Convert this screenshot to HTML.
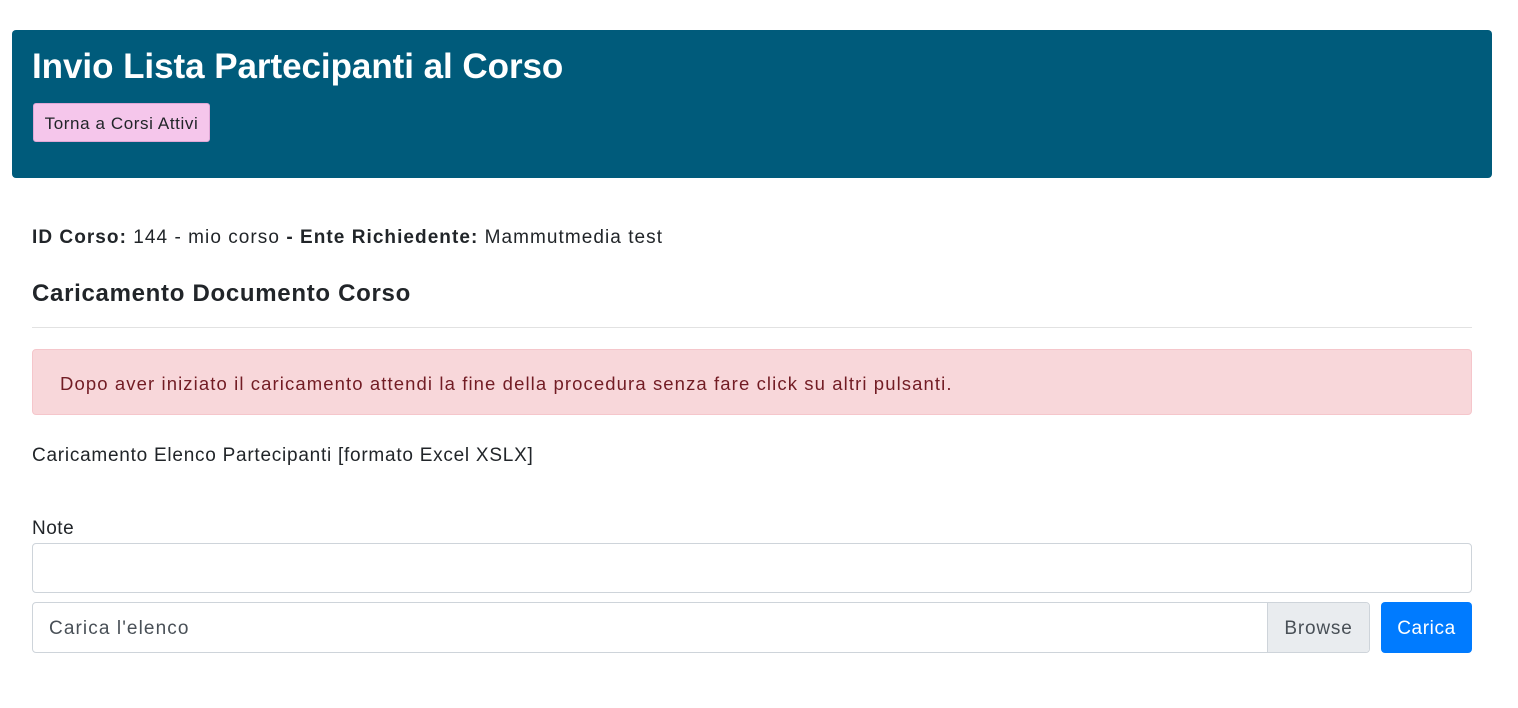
<!DOCTYPE html>
<html><head><meta charset="utf-8"><style>
*{box-sizing:border-box;margin:0;padding:0}
body{width:1518px;height:708px;background:#fff;font-family:"Liberation Sans",sans-serif;color:#212529;font-size:19px;letter-spacing:1.1px;position:relative;overflow:hidden}
.hdr{position:absolute;left:12px;top:30px;width:1480px;height:148px;background:#005b7b;border-radius:4px}
.hdr h1{position:absolute;left:20px;top:17px;color:#fff;font-size:35px;font-weight:bold;letter-spacing:-0.05px}
.btn1{position:absolute;left:21px;top:73px;width:177px;height:39px;background:#f5c6eb;border:1px solid #e0a8d6;border-radius:3px;font-size:17px;letter-spacing:0.6px;color:#212529;line-height:39px;text-align:center}
.abs{position:absolute}
hr{position:absolute;left:32px;top:327px;width:1440px;border:0;border-top:1px solid #e2e2e2}
.alert{position:absolute;left:32px;top:349px;width:1440px;height:66px;background:#f8d7da;border:1px solid #f5c6cb;border-radius:4px;color:#721c24;padding-left:27px;line-height:68px;font-size:18.5px}
.inp{position:absolute;left:32px;width:1440px;border:1px solid #ced4da;border-radius:4px;background:#fff}
</style></head><body>
<div class="hdr"><h1>Invio Lista Partecipanti al Corso</h1><div class="btn1">Torna a Corsi Attivi</div></div>
<div class="abs" style="left:32px;top:227px;letter-spacing:1.05px"><b>ID Corso:</b> 144 - mio corso <b>- Ente Richiedente:</b> Mammutmedia test</div>
<div class="abs" style="left:32px;top:280px;font-size:24px;font-weight:bold;letter-spacing:0.7px">Caricamento Documento Corso</div>
<hr>
<div class="alert">Dopo aver iniziato il caricamento attendi la fine della procedura senza fare click su altri pulsanti.</div>
<div class="abs" style="left:32px;top:445px;letter-spacing:0.75px">Caricamento Elenco Partecipanti [formato Excel XSLX]</div>
<div class="abs" style="left:32px;top:518px;letter-spacing:0.5px">Note</div>
<div class="inp" style="top:543px;height:50px"></div>
<div class="inp" style="top:602px;height:51px;width:1338px;color:#495057;line-height:51px;padding-left:16px">Carica l'elenco
<div style="position:absolute;right:0;top:0;width:102px;height:49px;background:#e9ecef;border-left:1px solid #ced4da;text-align:center;border-radius:0 3px 3px 0;letter-spacing:0.8px">Browse</div></div>
<div class="abs" style="left:1381px;top:602px;width:91px;height:51px;background:#007bff;border-radius:4px;color:#fff;text-align:center;line-height:53px;letter-spacing:0.6px">Carica</div>
</body></html>
